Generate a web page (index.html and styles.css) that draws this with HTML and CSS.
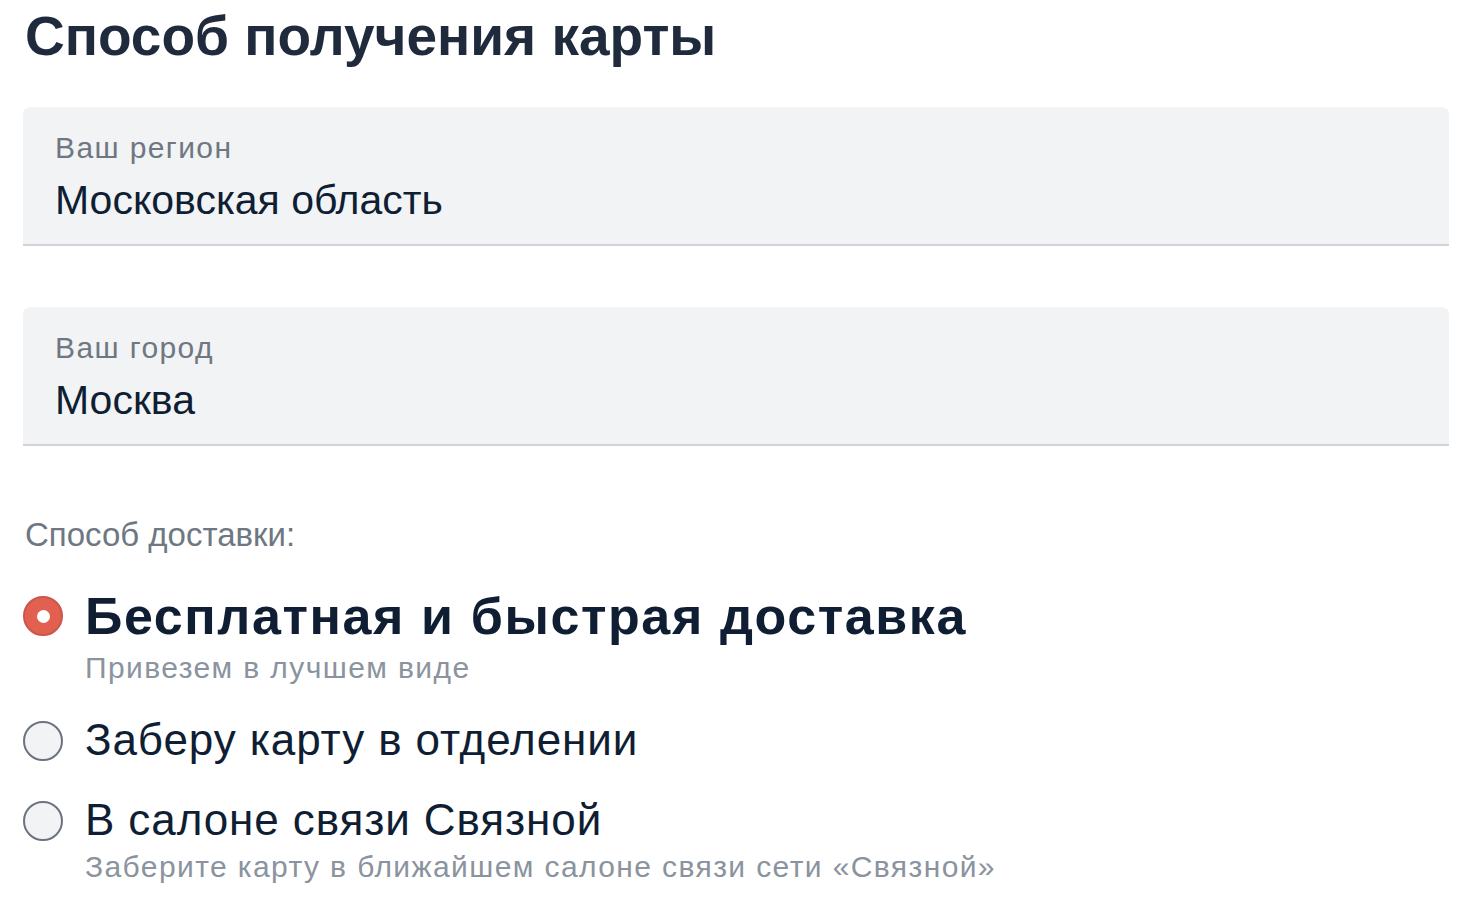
FILE: index.html
```html
<!DOCTYPE html>
<html lang="ru">
<head>
    <meta charset="UTF-8">
    <meta name="viewport" content="width=device-width, initial-scale=1.0">
    <title>Способ получения карты</title>
    <link rel="stylesheet" href="styles.css">
</head>
<body>
    <main class="page">
        <h1 class="title">Способ получения карты</h1>

        <div class="field">
            <span class="field-label">Ваш регион</span>
            <span class="field-value">Московская область</span>
        </div>

        <div class="field field-city">
            <span class="field-label">Ваш город</span>
            <span class="field-value">Москва</span>
        </div>

        <p class="group-label">Способ доставки:</p>

        <div class="options">
            <label class="option option-active">
                <span class="radio checked"></span>
                <span class="option-text">
                    <span class="option-title">Бесплатная и быстрая доставка</span>
                    <span class="option-sub">Привезем в лучшем виде</span>
                </span>
            </label>
            <label class="option option-pickup">
                <span class="radio"></span>
                <span class="option-text">
                    <span class="option-title">Заберу карту в отделении</span>
                </span>
            </label>
            <label class="option option-shop">
                <span class="radio"></span>
                <span class="option-text">
                    <span class="option-title">В салоне связи Связной</span>
                    <span class="option-sub">Заберите карту в ближайшем салоне связи сети «Связной»</span>
                </span>
            </label>
        </div>
    </main>
</body>
</html>
```

FILE: styles.css
```css
/* общие стили */
* { box-sizing: border-box; }
html, body {
    margin: 0;
    padding: 0;
    background-color: #fff;
    font-family: "Liberation Sans", Arial, sans-serif;
    color: #0f1e33;
}
.page {
    padding: 5px 20px 0 23px;
}
.title {
    margin: 0 0 0 2px;
    font-size: 55px;
    line-height: 62px;
    font-weight: bold;
    color: #1f2b3d;
}
/* поля */
.field {
    display: flex;
    flex-direction: column;
    height: 139px;
    margin-top: 40px;
    padding: 23px 32px 0;
    background-color: #f2f3f5;
    border-bottom: 2px solid #d1d3d8;
    border-radius: 8px 8px 0 0;
}
.field-city {
    margin-top: 61px;
}
.field-label {
    font-size: 30px;
    line-height: 36px;
    letter-spacing: 1.4px;
    color: #6e7782;
}
.field-value {
    margin-top: 10px;
    font-size: 41px;
    line-height: 48px;
    color: #0f1e33;
}
.group-label {
    margin: 70px 0 0 2px;
    font-size: 33px;
    line-height: 38px;
    color: #6e7782;
}
/* варианты доставки */
.options {
    display: flex;
    flex-direction: column;
    margin-top: 34px;
}
.option {
    display: flex;
    align-items: flex-start;
    gap: 22px;
    cursor: pointer;
}
.option-pickup {
    margin-top: 28px;
}
.option-shop {
    margin-top: 28px;
}
.radio {
    flex: none;
    width: 40px;
    height: 40px;
    margin-top: 7px;
    border: 2px solid #6b7380;
    border-radius: 50%;
    background-color: #f2f3f5;
}
.radio.checked {
    display: flex;
    align-items: center;
    justify-content: center;
    margin-top: 8px;
    border-color: #c9574b;
    background-color: #e2604f;
}
.radio.checked::after {
    content: "";
    width: 13px;
    height: 13px;
    border-radius: 50%;
    background-color: #fff;
}
.option-text {
    display: flex;
    flex-direction: column;
}
.option-title {
    font-size: 44px;
    line-height: 52px;
    letter-spacing: 0.9px;
    color: #0f1e33;
}
.option-active .option-title {
    font-size: 52px;
    line-height: 56px;
    letter-spacing: 1.6px;
    font-weight: bold;
}
.option-active .option-sub {
    margin-top: 6px;
}
.option-sub {
    margin-top: 3px;
    font-size: 30px;
    line-height: 36px;
    letter-spacing: 1.4px;
    color: #8a939e;
}
```
